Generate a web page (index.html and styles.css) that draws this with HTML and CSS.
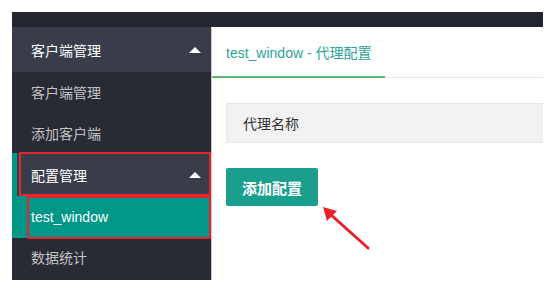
FILE: index.html
```html
<!DOCTYPE html>
<html lang="zh-CN">
<head>
  <meta charset="UTF-8">
  <title>代理配置</title>
  <link rel="stylesheet" href="styles.css">
</head>
<body>
  <div class="layout">
    <div class="header"></div>

    <div class="body">
      <div class="side">
        <div class="nav-item">
          <a class="nav-title">客户端管理<span class="caret"></span></a>
          <a class="nav-child first">客户端管理</a>
          <a class="nav-child second">添加客户端</a>
        </div>
        <div class="nav-item">
          <a class="nav-title active">配置管理<span class="caret"></span></a>
          <a class="nav-child this">test_window</a>
        </div>
        <div class="nav-item">
          <a class="nav-child last">数据统计</a>
        </div>

        <div class="mark mark-title"></div>
        <div class="mark mark-child"></div>
      </div>

      <div class="main">
        <div class="tab">
          <span class="tab-this">test_window - 代理配置</span>
        </div>
        <div class="field">代理名称</div>
        <button class="btn">添加配置</button>

        <svg class="arrow" width="60" height="54" viewBox="0 0 60 54">
          <line x1="54" y1="47" x2="16" y2="13" stroke="#e8212b" stroke-width="3" stroke-linecap="round"/>
          <polygon points="9,6 23,10 13,20" fill="#e8212b"/>
        </svg>
      </div>
    </div>
  </div>
</body>
</html>
```

FILE: styles.css
```css
body {
  margin: 0;
  background: #fff;
  font-family: "Liberation Sans", "Noto Sans CJK SC", sans-serif;
  font-size: 14px;
}

.layout {
  margin: 12px 0 0 12px;
  width: 531px;
}

.header {
  height: 15px;
  background: #23262e;
}

.body {
  display: flex;
  align-items: flex-start;
}

/* sidebar */
.side {
  position: relative;
  width: 199px;
  background: #393d49;
  border-right: 1px solid #c9c9c9;
}

.nav-title,
.nav-child {
  display: flex;
  align-items: center;
  box-sizing: border-box;
  padding-left: 19px;
  color: #fff;
  text-decoration: none;
}

.nav-title {
  height: 45px;
  background: #393d49;
  position: relative;
}

.nav-title.active {
  height: 43px;
  border-left: 5px solid #009688;
  padding-left: 14px;
}

.caret {
  position: absolute;
  right: 10px;
  top: 50%;
  margin-top: -3px;
  border: 6px solid transparent;
  border-top: 0;
  border-bottom: 6px solid #fff;
}

.nav-child {
  height: 40px;
  background: #282b33;
  color: rgba(255,255,255,0.72);
}

.nav-child.second {
  height: 41px;
}

.nav-child.this {
  height: 42px;
  background: #009688;
  color: #fff;
}

.nav-child.last {
  height: 42px;
  padding-bottom: 5px;
}

/* red annotation boxes */
.mark {
  position: absolute;
  border: 2px solid #e5242d;
  box-sizing: border-box;
  border-radius: 1px;
}

.mark-title {
  left: 7px;
  top: 125px;
  width: 192px;
  height: 44px;
}

.mark-child {
  left: 15px;
  top: 169px;
  width: 184px;
  height: 43px;
}

/* main */
.main {
  position: relative;
  flex: 1;
  padding-left: 14px;
}

.tab {
  height: 50px;
  margin-left: -14px;
  border-bottom: 1px solid #e6e6e6;
}

.tab-this {
  display: inline-flex;
  align-items: center;
  box-sizing: border-box;
  height: 51px;
  padding: 0 14px;
  color: #2ea393;
  border-bottom: 2px solid #5fb878;
}

.field {
  margin-top: 25px;
  height: 40px;
  box-sizing: border-box;
  padding-left: 16px;
  display: flex;
  align-items: center;
  background: #f2f2f2;
  border: 1px solid #e6e6e6;
  border-right: 0;
  color: #333;
}

.btn {
  margin-top: 25px;
  width: 92px;
  height: 38px;
  border: 0;
  border-radius: 2px;
  background: #1a9f8f;
  color: #fff;
  font-family: inherit;
  font-size: 15px;
  font-weight: bold;
}

.arrow {
  position: absolute;
  left: 102px;
  top: 174px;
}
```
